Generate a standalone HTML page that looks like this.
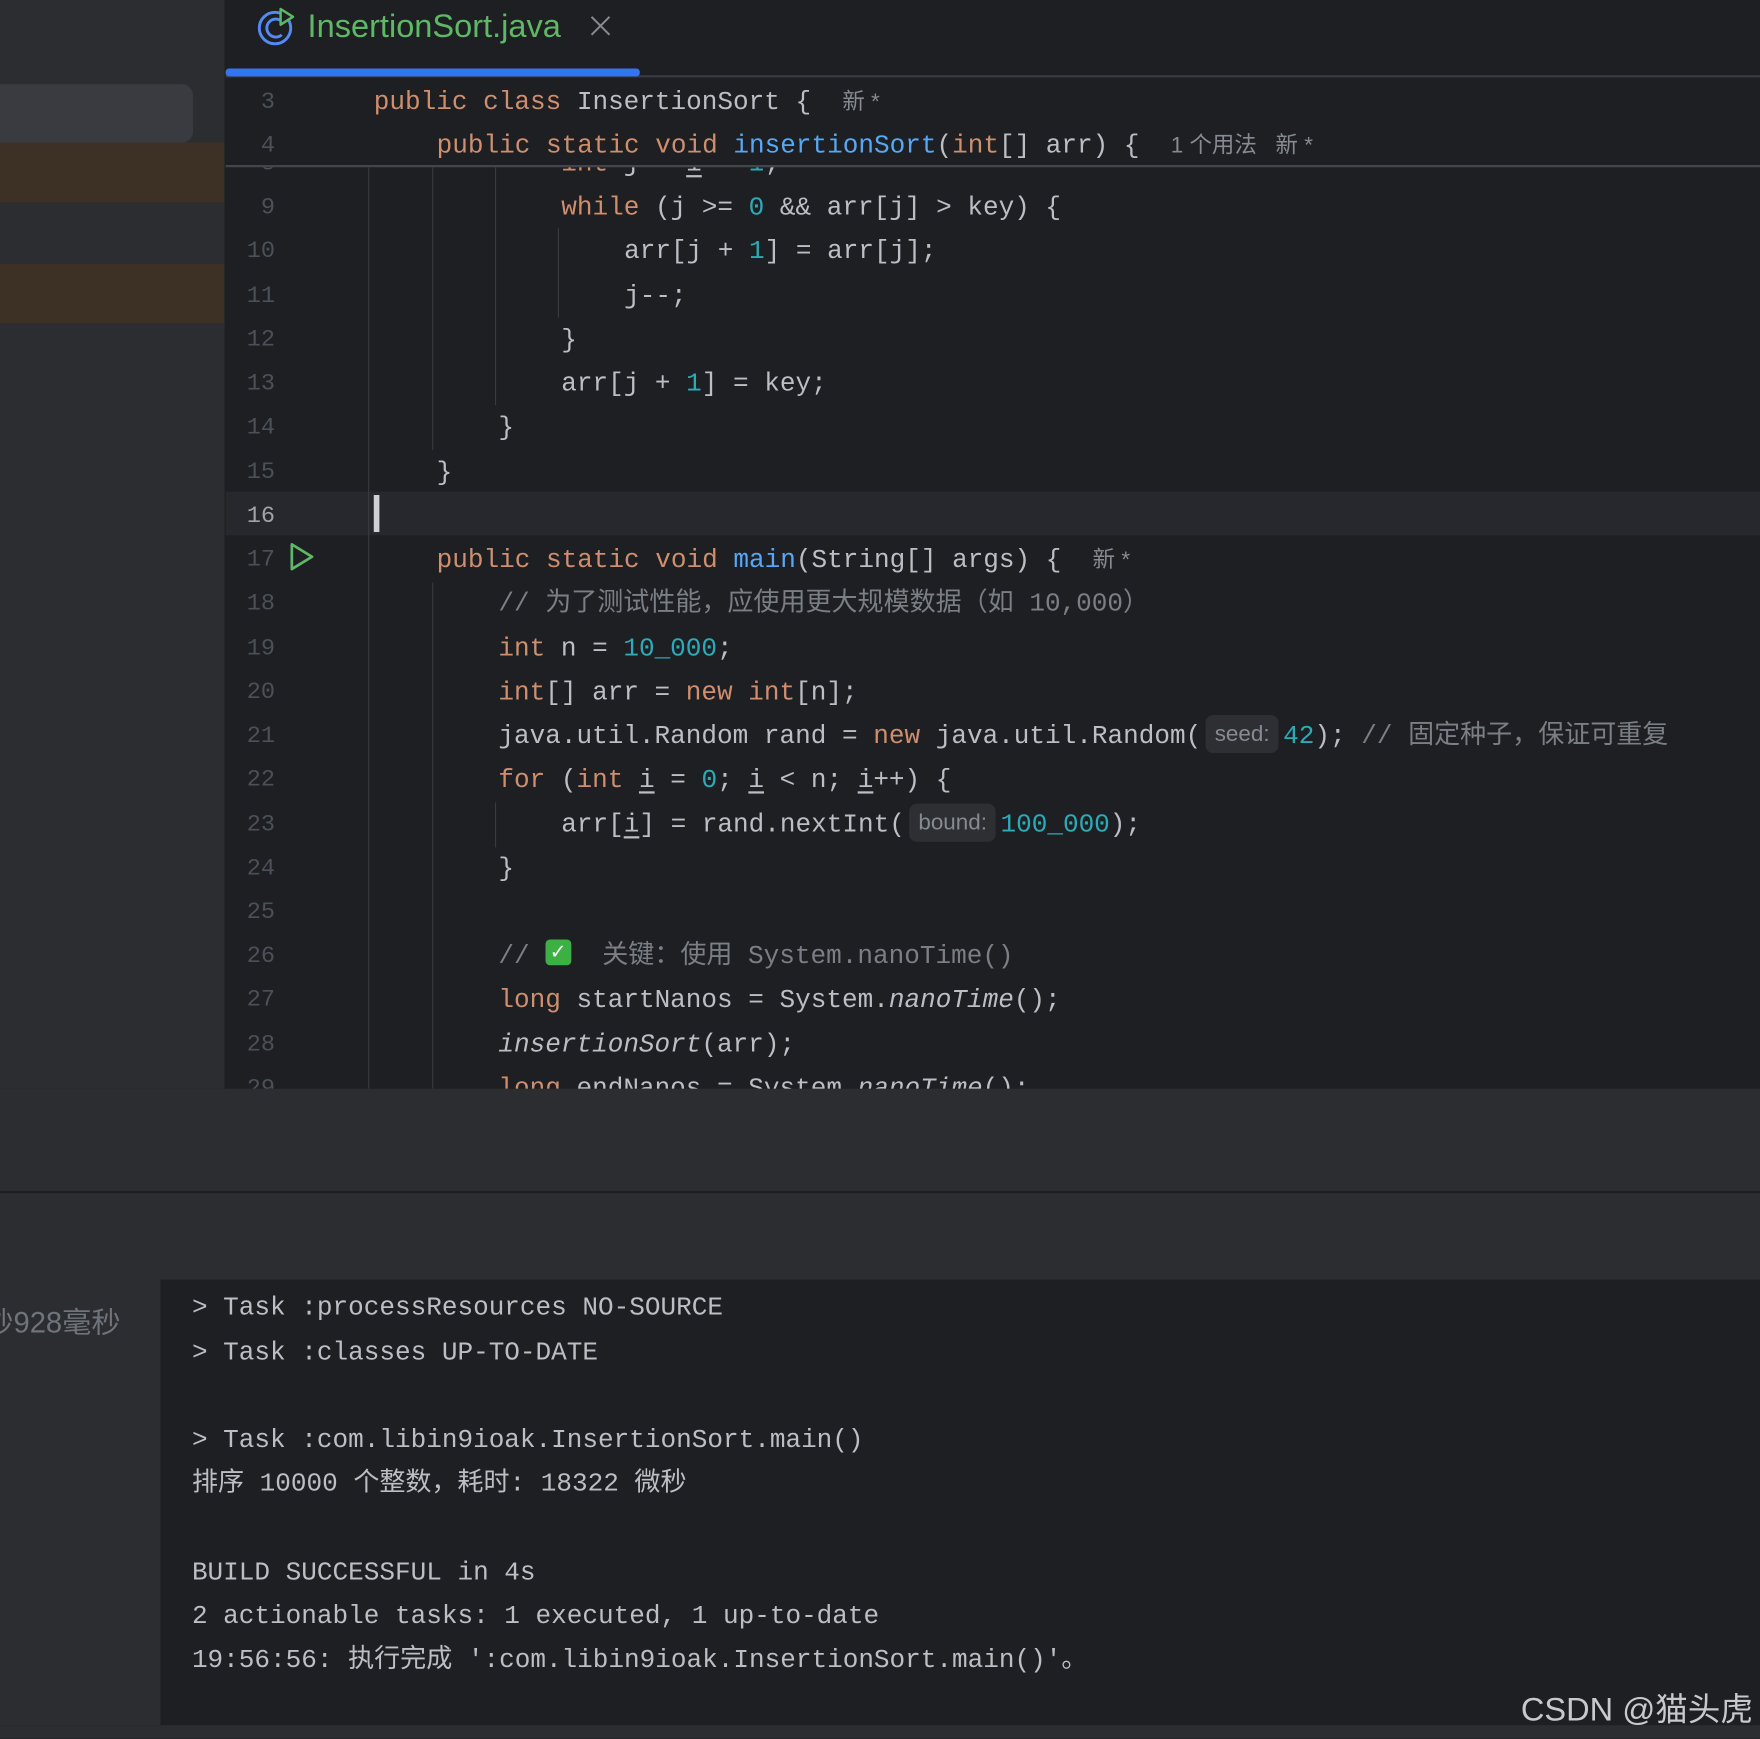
<!DOCTYPE html>
<html><head><meta charset="utf-8">
<style>
html,body{margin:0;padding:0;background:#1e1f22;width:1760px;height:1738px;overflow:hidden}
#w{position:absolute;left:0;top:0;width:1568px;height:1549px;transform:scale(1.12245);transform-origin:0 0;background:#1e1f22;overflow:hidden}
.a{position:absolute}
.m{font-family:"Liberation Mono","Noto Sans CJK SC",monospace;font-size:23.2px;white-space:pre;color:#bcbec4;height:39.2px;line-height:39.2px;margin-top:2px}
.k{color:#cf8e6d}.f{color:#56a8f5}.n{color:#2aacb8}.c{color:#7a7e85}.i{font-style:italic}.u{text-decoration:underline;text-underline-offset:4px}
.ln{position:absolute;left:205px;width:40px;text-align:right;font-family:"Liberation Mono",monospace;font-size:21px;color:#4b5059;height:39.2px;line-height:39.2px;margin-top:2px}
.h{font-family:"Liberation Sans","Noto Sans CJK SC",sans-serif;font-size:20px;color:#868a91}
.hb{display:inline-block;background:#2d2f33;border-radius:7px;font-family:"Liberation Sans",sans-serif;font-size:20px;color:#868a91;height:34px;line-height:34px;padding:0 8px;margin:0 4px;vertical-align:middle;position:relative;top:-2px}
.g{position:absolute;width:1px;background:#393b40}
</style></head><body><div id="w">
<div class="a" style="left:0;top:0;width:200px;height:970px;background:#2b2d30"></div>
<div class="a" style="left:0;top:75px;width:172px;height:52px;background:#393b40;border-radius:0 10px 10px 0"></div>
<div class="a" style="left:0;top:127px;width:200px;height:53px;background:#3d3125"></div>
<div class="a" style="left:0;top:235px;width:200px;height:53px;background:#3d3125"></div>
<div class="a" style="left:201px;top:67px;width:1367px;height:2px;background:#393b40"></div>
<div class="a" style="left:201px;top:61px;width:369px;height:7px;background:#3574f0;border-radius:3px"></div>
<svg class="a" style="left:228px;top:5px" width="38" height="36" viewBox="0 0 38 36"><circle cx="17" cy="20" r="14" fill="none" stroke="#548af7" stroke-width="2.6"/><path d="M23 14a8 8 0 1 0 0 12" fill="none" stroke="#548af7" stroke-width="2.6"/><path d="M22 3l11 7-11 7z" fill="#1e1f22" stroke="#5fb865" stroke-width="2.2" stroke-linejoin="round"/></svg>
<div class="a" style="left:274px;top:6px;font-family:'Liberation Sans',sans-serif;font-size:29px;color:#5fb865;line-height:36px">InsertionSort.java</div>
<svg class="a" style="left:525px;top:13px" width="20" height="20" viewBox="0 0 20 20"><path d="M2 2L18 18M18 2L2 18" stroke="#868a91" stroke-width="1.8"/></svg>
<div class="a" style="left:201px;top:149px;width:1367px;height:821px;overflow:hidden">
 <div class="a" style="left:0;top:289px;width:1367px;height:39px;background:#26282e"></div>
 <div class="g" style="left:127px;top:0;height:821px"></div>
 <div class="g" style="left:184px;top:0;height:252px"></div>
 <div class="g" style="left:184px;top:370px;height:451px"></div>
 <div class="g" style="left:240px;top:0;height:212px"></div>
 <div class="g" style="left:240px;top:566px;height:40px"></div>
 <div class="g" style="left:296px;top:54px;height:80px"></div>
 <div class="a" style="left:132px;top:292px;width:5px;height:33px;background:#ced0d6"></div>
 <svg class="a" style="left:56px;top:334px" width="24" height="26" viewBox="0 0 24 26"><path d="M3 2l18 11-18 11z" fill="none" stroke="#5fb865" stroke-width="2.4" stroke-linejoin="round"/></svg>
</div>
<div class="a" style="left:201px;top:149px;width:1367px;height:821px;overflow:hidden">
<div class="a" style="left:-201px;top:-149px;width:1568px;height:1000px">
<div class="ln" style="top:125px">8</div><div class="a m" style="left:500px;top:125px"><span class="k">int</span> j = <span class="u">i</span> - <span class="n">1</span>;</div>
<div class="ln" style="top:164px">9</div><div class="a m" style="left:500px;top:164px"><span class="k">while</span> (j &gt;= <span class="n">0</span> &amp;&amp; arr[j] &gt; key) {</div>
<div class="ln" style="top:203px">10</div><div class="a m" style="left:556px;top:203px">arr[j + <span class="n">1</span>] = arr[j];</div>
<div class="ln" style="top:243px">11</div><div class="a m" style="left:556px;top:243px">j--;</div>
<div class="ln" style="top:282px">12</div><div class="a m" style="left:500px;top:282px">}</div>
<div class="ln" style="top:321px">13</div><div class="a m" style="left:500px;top:321px">arr[j + <span class="n">1</span>] = key;</div>
<div class="ln" style="top:360px">14</div><div class="a m" style="left:444px;top:360px">}</div>
<div class="ln" style="top:400px">15</div><div class="a m" style="left:389px;top:400px">}</div>
<div class="ln" style="top:439px;color:#a1a3ab">16</div>
<div class="ln" style="top:478px">17</div><div class="a m" style="left:389px;top:478px"><span class="k">public static void</span> <span class="f">main</span>(String[] args) {  <span class="h">新 *</span></div>
<div class="ln" style="top:517px">18</div><div class="a m c" style="left:444px;top:517px">// 为了测试性能，应使用更大规模数据（如 10,000）</div>
<div class="ln" style="top:557px">19</div><div class="a m" style="left:444px;top:557px"><span class="k">int</span> n = <span class="n">10_000</span>;</div>
<div class="ln" style="top:596px">20</div><div class="a m" style="left:444px;top:596px"><span class="k">int</span>[] arr = <span class="k">new int</span>[n];</div>
<div class="ln" style="top:635px">21</div><div class="a m" style="left:444px;top:635px">java.util.Random rand = <span class="k">new</span> java.util.Random(<span class="hb">seed:</span><span class="n">42</span>); <span class="c">// 固定种子，保证可重复</span></div>
<div class="ln" style="top:674px">22</div><div class="a m" style="left:444px;top:674px"><span class="k">for</span> (<span class="k">int</span> <span class="u">i</span> = <span class="n">0</span>; <span class="u">i</span> &lt; n; <span class="u">i</span>++) {</div>
<div class="ln" style="top:714px">23</div><div class="a m" style="left:500px;top:714px">arr[<span class="u">i</span>] = rand.nextInt(<span class="hb">bound:</span><span class="n">100_000</span>);</div>
<div class="ln" style="top:753px">24</div><div class="a m" style="left:444px;top:753px">}</div>
<div class="ln" style="top:792px">25</div>
<div class="ln" style="top:831px">26</div><div class="a m c" style="left:444px;top:831px">// <span style="display:inline-block;width:23px;height:23px;background:#3cb043;border-radius:4px;vertical-align:middle;position:relative;top:-3px;color:#fff;text-align:center;line-height:23px;font-family:'DejaVu Sans';font-size:18px;font-weight:bold">✓</span>  关键：使用 System.nanoTime()</div>
<div class="ln" style="top:870px">27</div><div class="a m" style="left:444px;top:870px"><span class="k">long</span> startNanos = System.<span class="i">nanoTime</span>();</div>
<div class="ln" style="top:910px">28</div><div class="a m" style="left:444px;top:910px"><span class="i">insertionSort</span>(arr);</div>
<div class="ln" style="top:949px">29</div><div class="a m" style="left:444px;top:949px"><span class="k">long</span> endNanos = System.<span class="i">nanoTime</span>();</div>
</div></div>
<div class="a" style="left:201px;top:69px;width:1367px;height:79px;background:#1e1f22"></div>
<div class="a" style="left:201px;top:147px;width:1367px;height:2px;background:#43454a"></div>
<div class="ln" style="top:70px">3</div><div class="a m" style="left:333px;top:70px"><span class="k">public class</span> InsertionSort {  <span class="h">新 *</span></div>
<div class="ln" style="top:109px">4</div><div class="a m" style="left:389px;top:109px"><span class="k">public static void</span> <span class="f">insertionSort</span>(<span class="k">int</span>[] arr) {  <span class="h">1 个用法   新 *</span></div>
<div class="a" style="left:0;top:970px;width:1568px;height:170px;background:#2b2d30"></div>
<div class="a" style="left:0;top:1061px;width:1568px;height:2px;background:#1e1f22"></div>
<div class="a" style="left:0;top:1140px;width:143px;height:397px;background:#2b2d30;overflow:hidden"><div class="a" style="left:-14px;top:18px;font-family:'Liberation Sans','Noto Sans CJK SC',sans-serif;font-size:26px;color:#6f737a;white-space:nowrap">秒928毫秒</div></div>
<div class="a" style="left:0;top:1537px;width:1568px;height:12px;background:#2b2d30"></div>
<div class="a m" style="left:171px;top:1144px">&gt; Task :processResources NO-SOURCE</div>
<div class="a m" style="left:171px;top:1184px">&gt; Task :classes UP-TO-DATE</div>
<div class="a m" style="left:171px;top:1262px">&gt; Task :com.libin9ioak.InsertionSort.main()</div>
<div class="a m" style="left:171px;top:1301px">排序 10000 个整数，耗时: 18322 微秒</div>
<div class="a m" style="left:171px;top:1380px">BUILD SUCCESSFUL in 4s</div>
<div class="a m" style="left:171px;top:1419px">2 actionable tasks: 1 executed, 1 up-to-date</div>
<div class="a m" style="left:171px;top:1458px">19:56:56: 执行完成 ':com.libin9ioak.InsertionSort.main()'。</div>
<div class="a" style="left:1355px;top:1500px;font-family:'Liberation Sans','Noto Sans CJK SC',sans-serif;font-size:29px;color:#c8c9cc;white-space:nowrap">CSDN @猫头虎</div>
</div></body></html>
